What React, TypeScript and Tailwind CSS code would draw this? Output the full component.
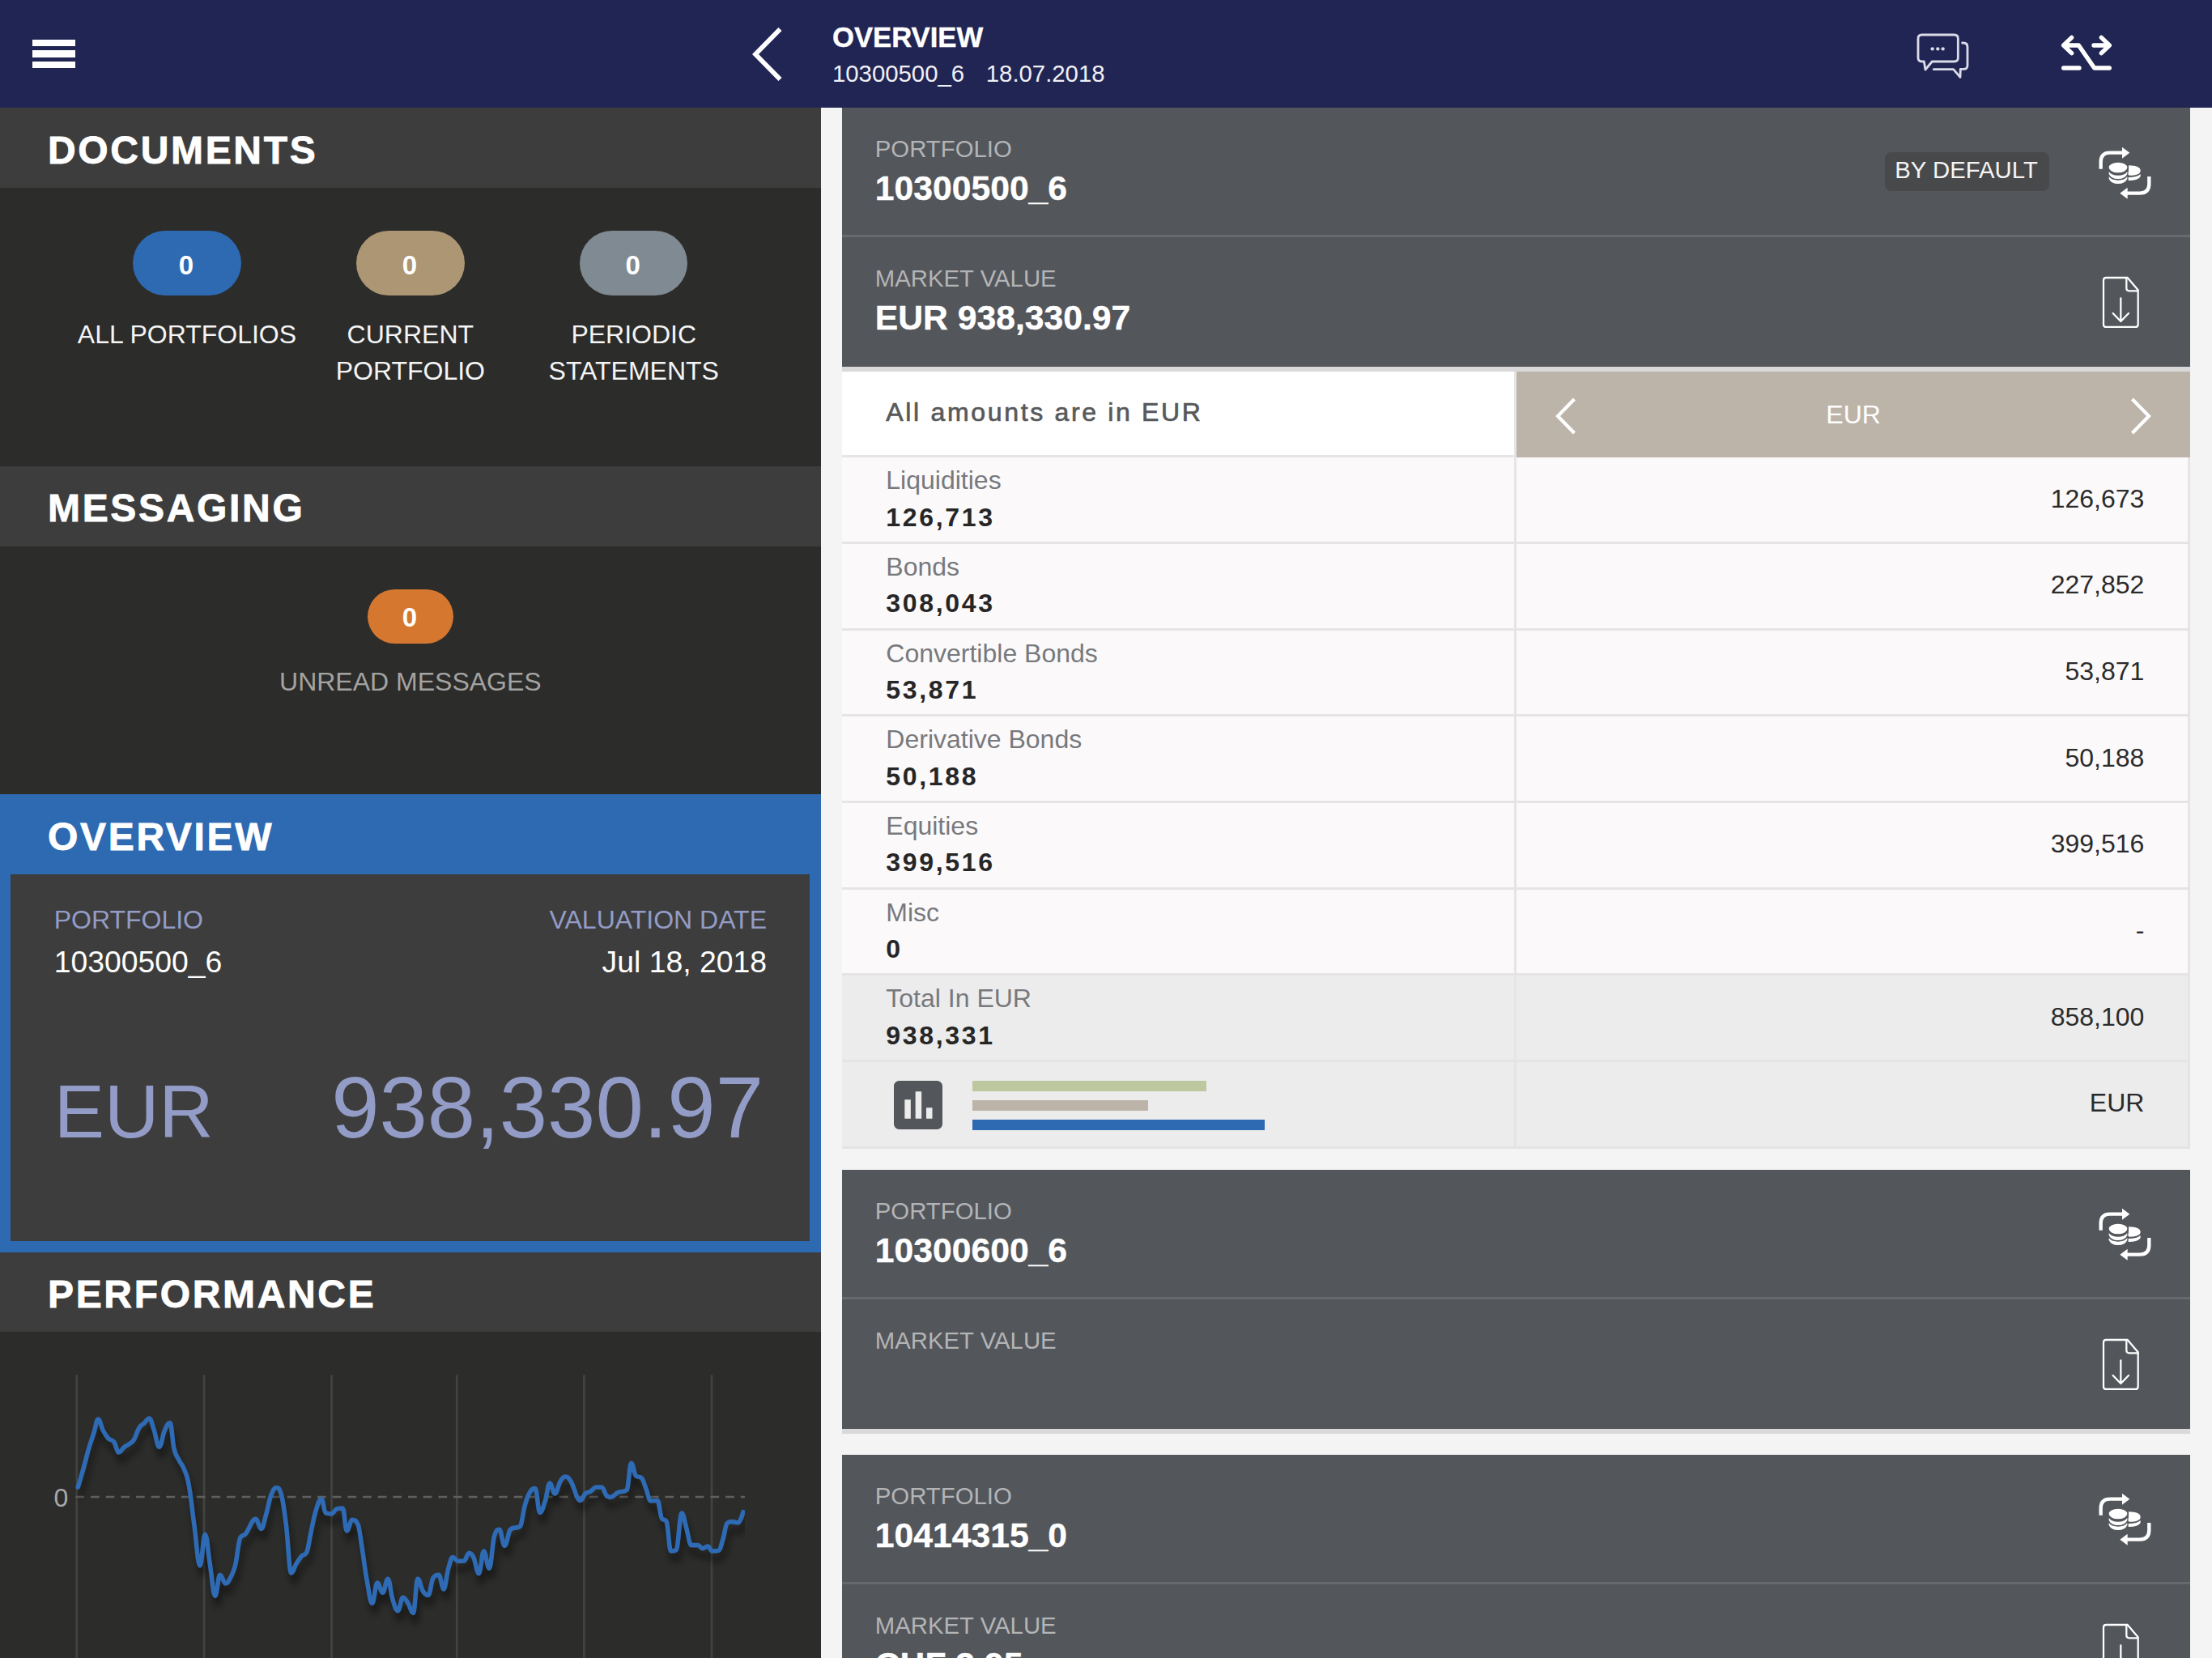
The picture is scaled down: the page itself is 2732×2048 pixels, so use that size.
import React from "react";

type Point = [number, number];

const performance: Point[] = [
  [96.3, 1837.3], [103.3, 1813.3], [109.5, 1790], [116, 1770], [121.3, 1753.3], [127.3, 1767.3], [134, 1777.3], [140.7, 1781.3],
  [146.7, 1794.3], [153.3, 1788], [165, 1779.3], [171.7, 1764.3], [178.3, 1758], [184.3, 1752.3], [190, 1766],
  [196.7, 1787.7], [203.3, 1767.3], [210, 1758], [215, 1790], [221.7, 1805], [227.3, 1815], [233.3, 1835],
  [240, 1885], [247, 1934.3], [253.3, 1895.7], [259.3, 1932.3], [265.7, 1971.7], [271.7, 1945.7], [278.7, 1956.3],
  [285, 1948.3], [290.7, 1933.3], [296.7, 1900], [303.3, 1895], [315.7, 1876.7], [322.7, 1888.7], [328.3, 1872.3],
  [335, 1846.7], [341.3, 1838], [347.3, 1846], [353.3, 1883.3], [359.7, 1943.3], [366, 1931.7], [372.7, 1922.3],
  [379, 1917.3], [384, 1893.3], [390, 1866.7], [397, 1852], [402.3, 1869.3], [409.3, 1870.3], [415.7, 1864.3],
  [423.3, 1863.3], [428.3, 1891.3], [435, 1877.7], [442.7, 1885], [447.3, 1913.3], [453.3, 1953.3], [459.7, 1980.7],
  [466, 1955.3], [472.7, 1967.7], [479, 1950.7], [485, 1976], [491.3, 1990], [497.7, 1973.7], [504, 1980.7],
  [510.3, 1992.7], [516, 1950.7], [522.3, 1965.7], [529, 1970.7], [535, 1949.3], [542, 1945.7], [548, 1963.3],
  [553.6, 1938.3], [559.3, 1924], [566, 1928.7], [573.2, 1928.3], [579.3, 1918.7], [585, 1924.3], [591.4, 1944],
  [597.5, 1916.3], [604.3, 1937.7], [610.4, 1898.3], [616.8, 1889.7], [623.2, 1909.7], [630, 1890], [642.9, 1885],
  [648.2, 1860], [654.6, 1843.3], [661, 1839], [666.8, 1868.7], [673.2, 1855], [679, 1832.3], [685.4, 1845.3],
  [692.1, 1830], [698.6, 1824.3], [705, 1830], [716.8, 1853.7], [723.2, 1845], [729.3, 1842.7], [736.4, 1837.3],
  [743.2, 1837.3], [748.9, 1847.3], [753.9, 1849.7], [763.2, 1844], [774.3, 1840.7], [779.6, 1807.7], [785.4, 1823.3],
  [792.5, 1826], [798.2, 1840], [803.6, 1854.3], [812.1, 1854], [817.1, 1875.3], [823.2, 1880], [828.6, 1916.3],
  [835, 1915.3], [842.1, 1869.3], [847.5, 1886.7], [853.9, 1909], [861.8, 1909], [867.9, 1913], [874.3, 1910.3],
  [879.6, 1916.3], [887.5, 1915.7], [892.9, 1901.7], [898.2, 1881.7], [903.6, 1880], [911.8, 1881.3], [917.9, 1868],
];

const gridLines = [94.7, 252, 409.5, 564.3, 721.4, 879];

/** Spline whose control points never leave the range of neighbouring values. */
function smoothPath(points: Point[]): string {
  const controls = points.map(([x, y], i) => {
    const prev = points[i - 1];
    const next = points[i + 1];
    if (!prev || !next) return { left: [x, y], right: [x, y] };
    const lx = (1.5 * x + prev[0]) / 2.5;
    let ly = (1.5 * y + prev[1]) / 2.5;
    const rx = (1.5 * x + next[0]) / 2.5;
    let ry = (1.5 * y + next[1]) / 2.5;
    const shift = ((ry - ly) * (rx - x)) / (rx - lx) + y - ry;
    ly += shift;
    ry += shift;
    const clamp = (v: number, other: number) =>
      Math.min(Math.max(v, Math.min(other, y)), Math.max(other, y));
    const cl = clamp(ly, prev[1]);
    if (cl !== ly) {
      ly = cl;
      ry = 2 * y - ly;
    }
    const cr = clamp(ry, next[1]);
    if (cr !== ry) {
      ry = cr;
      ly = 2 * y - ry;
    }
    return { left: [lx, ly], right: [rx, ry] };
  });
  let d = `M${points[0][0]} ${points[0][1]}`;
  for (let i = 1; i < points.length; i++) {
    const a = controls[i - 1].right;
    const b = controls[i].left;
    d += `C${a[0].toFixed(2)} ${a[1].toFixed(2)} ${b[0].toFixed(2)} ${b[1].toFixed(2)} ${points[i][0]} ${points[i][1]}`;
  }
  return d;
}

const linePath = smoothPath(performance);

function ChatIcon() {
  return (
    <svg viewBox="196 120 200 180" className="h-[60px] w-[66.67px]" fill="none" stroke="#dadbe8" strokeWidth="8.5" strokeLinejoin="round" strokeLinecap="round">
      <path d="M227 231H219Q205 231 205 217V146Q205 132 219 132H339Q353 132 353 146V217Q353 231 339 231H257L232 261Z" />
      <path d="M369 162H373Q388 162 388 177V245Q388 259 374 259H362L361 289L336 260H263" />
      <g fill="#dadbe8" stroke="none">
        <circle cx="258" cy="184" r="6.5" />
        <circle cx="278" cy="184" r="6.5" />
        <circle cx="297" cy="184" r="6.5" />
      </g>
    </svg>
  );
}

function RouteIcon() {
  return (
    <svg viewBox="736 130 192 140" className="h-[46.67px] w-[64px]" fill="none" stroke="#fff" strokeWidth="16" strokeLinejoin="round" strokeLinecap="round">
      <path d="M777 143L747 172L777 201M747 172H803L861 256H917M747 256H805M859 172H917M887 143L917 172L887 201" />
    </svg>
  );
}

function ExchangeIcon() {
  return (
    <svg viewBox="876 540 200 200" className="size-[66.67px] shrink-0" fill="#fff">
      <path d="M887 626V600Q887 566 921 566H970M1066 654V682Q1066 716 1032 716H982" fill="none" stroke="#fff" strokeWidth="13" />
      <path d="M966 545L994 566L966 587ZM986 695L958 716L986 737Z" />
      <ellipse cx="951" cy="621" rx="34" ry="19" />
      <path d="M917 636Q926 650 951 650Q976 650 985 636V645Q976 663 951 663Q926 663 917 645Z" />
      <path d="M917 654Q926 668 951 668Q976 668 985 654V663Q976 681 951 681Q926 681 917 663Z" />
      <path d="M990 613Q1034 614 1034 632Q1034 650 992 650Q988 648 988 642Q991 636 990 613Z" />
      <path d="M989 657Q1022 657 1034 645V654Q1027 669 989 669Z" />
    </svg>
  );
}

function DownloadIcon() {
  return (
    <svg viewBox="890 1019 140 200" className="h-[66.67px] w-[46.67px] shrink-0" fill="none" stroke="#fff" strokeWidth="6.8" strokeLinejoin="round" strokeLinecap="round">
      <path d="M985 1028H906Q896 1028 896 1038V1201Q896 1211 906 1211H1014Q1024 1211 1024 1201V1074Z" />
      <path d="M981 1029V1068Q981 1077 991 1077H1023" />
      <path d="M960 1104V1189M931 1160L960 1190L989 1160" />
    </svg>
  );
}

function ReportIcon() {
  return (
    <svg viewBox="0 0 24 24" className="size-[80px] shrink-0" fill="#53565b">
      <path d="M19 3H5c-1.100 0-2 .9-2 2v14c0 1.100.9 2 2 2h14c1.100 0 2-.9 2-2V5c0-1.100-.9-2-2-2zM9.250 17H7v-7h2.250v7zm4 0H11V7h2.250v10zm4 0H15v-4h2.250v4z" />
    </svg>
  );
}

function Chevron({ flip = false }: { flip?: boolean }) {
  return (
    <svg viewBox="0 0 26 46" className={flip ? "h-[46px] w-[26px] -scale-x-100" : "h-[46px] w-[26px]"} fill="none" stroke="#fff" strokeWidth="4.2">
      <path d="M23.500 2L3 23L23.500 44" />
    </svg>
  );
}

function TopBar() {
  return (
    <header className="flex h-[133.33px] shrink-0 items-center bg-[#212553] text-white">
      <div className="flex w-[929px] shrink-0 pl-[40px]">
        <button aria-label="Menu" className="flex w-[53.33px] flex-col gap-[5px]">
          <span className="h-[8.500px] bg-white" />
          <span className="h-[8.500px] bg-white" />
          <span className="h-[8.500px] bg-white" />
        </button>
      </div>
      <button aria-label="Back" className="w-[99px]">
        <svg viewBox="0 0 38 66" className="h-[66px] w-[38px]" fill="none" stroke="#fff" strokeWidth="5.800">
          <path d="M34.500 2L4 33L34.500 64" />
        </svg>
      </button>
      <div className="flex-1 pt-[4px]">
        <h1 className="text-[34.67px] leading-[44.600px] font-bold [-webkit-text-stroke:0.4px_#fff]">OVERVIEW</h1>
        <p className="flex gap-[26.67px] text-[29.33px] leading-[44.600px] text-[#f0f0f5]">
          <span>10300500_6</span>
          <span>18.07.2018</span>
        </p>
      </div>
      <div className="flex items-center gap-[113px] pt-[4px] pr-[122.67px]">
        <ChatIcon />
        <span className="-mt-[6px]">
          <RouteIcon />
        </span>
      </div>
    </header>
  );
}

function SectionTitle({ title, active = false }: { title: string; active?: boolean }) {
  return (
    <div className={`flex h-[98.67px] items-center pt-[6px] pl-[59px] ${active ? "bg-[#2e6ab2]" : "bg-[#3d3d3d]"}`}>
      <h2 className="text-[48px] leading-none font-bold tracking-[2.67px] text-white [-webkit-text-stroke:0.8px_#fff]">{title}</h2>
    </div>
  );
}

function DocumentCounter({ tone, label }: { tone: string; label: string }) {
  return (
    <div className="flex flex-1 flex-col items-center">
      <span className={`flex h-[80px] w-[133.33px] items-center justify-center rounded-full pt-[4px] pr-[2px] text-[33px] font-bold text-white ${tone}`}>0</span>
      <span className="mt-[25.500px] text-center text-[32px] leading-[45.33px] whitespace-pre-line text-[#f4f4f4]">{label}</span>
    </div>
  );
}

function PerformanceChart() {
  return (
    <svg viewBox="0 1645.33 1013.33 402.67" className="block h-[402.67px] w-[1013.33px]">
      <defs>
        <filter id="soft" x="-5%" y="-10%" width="110%" height="125%">
          <feGaussianBlur stdDeviation="4" />
        </filter>
        <clipPath id="plot">
          <rect x="60" y="1698" width="860" height="350" />
        </clipPath>
      </defs>
      {gridLines.map((x) => (
        <line key={x} x1={x} x2={x} y1="1698.67" y2="2048" stroke="#434342" strokeWidth="2.67" />
      ))}
      <line x1="93.33" x2="920" y1="1849.33" y2="1849.33" stroke="#60605f" strokeWidth="2.67" strokeDasharray="10.67 8" />
      <text x="66.5" y="1861" fontSize="32" fill="#a9a9a9" fontFamily="Liberation Sans, sans-serif">0</text>
      <g clipPath="url(#plot)" fill="none" strokeLinejoin="round" strokeLinecap="round">
        <path d={linePath} transform="translate(3 11)" stroke="#000" strokeOpacity="0.45" strokeWidth="6" filter="url(#soft)" />
        <path d={linePath} stroke="#2e6bb4" strokeWidth="5.6" />
      </g>
    </svg>
  );
}

function Sidebar() {
  return (
    <aside className="w-[1013.67px] shrink-0 overflow-hidden bg-[#2c2c2b]">
      <SectionTitle title="DOCUMENTS" />
      <div className="flex h-[344px] px-[93px] pt-[53.33px]">
        <DocumentCounter tone="bg-[#2e6ab2]" label="ALL PORTFOLIOS" />
        <DocumentCounter tone="bg-[#ac9673]" label={"CURRENT\nPORTFOLIO"} />
        <DocumentCounter tone="bg-[#808a92]" label={"PERIODIC\nSTATEMENTS"} />
      </div>
      <SectionTitle title="MESSAGING" />
      <div className="flex h-[306.67px] flex-col items-center pt-[53.33px]">
        <span className="flex h-[66.67px] w-[106.67px] items-center justify-center rounded-full bg-[#d67730] pt-[3px] pr-[2px] text-[33px] font-bold text-white">0</span>
        <span className="mt-[25px] text-[32px] leading-[45.33px] text-[#a3a3a2]">UNREAD MESSAGES</span>
      </div>
      <SectionTitle title="OVERVIEW" active />
      <div className="h-[466.67px] bg-[#2e6ab2] px-[13.33px]">
        <div className="h-[453.33px] bg-[#3d3d3d] px-[53.33px] pt-[30px]">
          <div className="flex justify-between">
            <div>
              <p className="text-[32px] leading-[52px] text-[#939cc6]">PORTFOLIO</p>
              <p className="text-[37.33px] leading-[52px] text-white">10300500_6</p>
            </div>
            <div className="text-right">
              <p className="text-[32px] leading-[52px] text-[#939cc6]">VALUATION DATE</p>
              <p className="text-[37.33px] leading-[52px] text-white">Jul 18, 2018</p>
            </div>
          </div>
          <div className="mt-[90px] flex items-baseline justify-between pr-[4px] text-[#939cc6]">
            <span className="text-[93.33px] leading-[128px]">EUR</span>
            <span className="text-[106.67px] leading-[128px]">938,330.97</span>
          </div>
        </div>
      </div>
      <SectionTitle title="PERFORMANCE" />
      <PerformanceChart />
    </aside>
  );
}

function Field({ label, value, children, divider = false }: { label: string; value?: string; children: React.ReactNode; divider?: boolean }) {
  return (
    <div className={`flex h-[160px] justify-between pl-[40.500px] ${divider ? "border-b-[3px] border-[#66696d]" : ""}`}>
      <div className="pt-[27.800px]">
        <p className="text-[29.33px] leading-[45.33px] text-[#b3b4b6]">{label}</p>
        <p className="text-[42.67px] leading-[53.33px] font-bold text-white [-webkit-text-stroke:0.4px_#fff]">{value}</p>
      </div>
      {children}
    </div>
  );
}

function PortfolioCard({ id, value, isDefault = false }: { id: string; value?: string; isDefault?: boolean }) {
  return (
    <div className="bg-[#dad9da] pb-[5.33px]">
      <div className="bg-[#53565b]">
        <Field label="PORTFOLIO" value={id} divider>
          <div className="flex items-center gap-[60.500px] pt-[2px] pr-[47.33px]">
            {isDefault && (
              <span className="flex h-[48px] w-[202.67px] -translate-y-[1px] items-center justify-center rounded-[8px] bg-[#48494b] pr-[2px] pb-[4px] text-[29.33px] whitespace-nowrap text-[#f4f4f4]">BY DEFAULT</span>
            )}
            <ExchangeIcon />
          </div>
        </Field>
        <Field label="MARKET VALUE" value={value}>
          <div className="flex items-center pr-[62.500px]">
            <DownloadIcon />
          </div>
        </Field>
      </div>
    </div>
  );
}

const holdings = [
  { name: "Liquidities", total: "126,713", eur: "126,673" },
  { name: "Bonds", total: "308,043", eur: "227,852" },
  { name: "Convertible Bonds", total: "53,871", eur: "53,871" },
  { name: "Derivative Bonds", total: "50,188", eur: "50,188" },
  { name: "Equities", total: "399,516", eur: "399,516" },
  { name: "Misc", total: "0", eur: "-" },
  { name: "Total In EUR", total: "938,331", eur: "858,100" },
];

function HoldingsTable() {
  return (
    <div className="text-[32px]">
      <div className="grid h-[106.67px] grid-cols-2">
        <div className="flex items-center border-r-[3px] border-b-[3px] border-[#e6e5e6] bg-white pb-[2px] pl-[54px] tracking-[2.67px] text-[#58595b] [-webkit-text-stroke:0.7px_#58595b]">
          All amounts are in EUR
        </div>
        <div className="flex items-center justify-between bg-[#bdb4a9] px-[48.500px] text-white">
          <span className="pt-[4px]">
            <Chevron />
          </span>
          <span>EUR</span>
          <span className="pt-[4px]">
            <Chevron flip />
          </span>
        </div>
      </div>
      {holdings.map((row, i) => (
        <div key={row.name} className={`grid h-[106.67px] grid-cols-2 ${i === 6 ? "bg-[#ececec]" : "bg-[#fbf9fa]"}`}>
          <div className="border-r-[3px] border-b-[3px] border-[#e6e5e6] pt-[6px] pl-[54px] leading-[45.33px]">
            <p className="text-[#77797d]">{row.name}</p>
            <p className="font-bold tracking-[2.67px] text-[#262626]">{row.total}</p>
          </div>
          <div className="border-r-[3px] border-b-[3px] border-[#e6e5e6] pt-[28.500px] pr-[54px] text-right leading-[45.33px] text-[#2b2b2b]">{row.eur}</div>
        </div>
      ))}
      <div className="grid h-[106.67px] grid-cols-2 bg-[#ececec]">
        <div className="flex items-center border-r-[3px] border-b-[3px] border-[#e4e4e4] pt-[3px] pl-[54px]">
          <ReportIcon />
          <div className="ml-[26.67px] flex w-[361px] flex-col gap-[10.67px]">
            <span className="h-[13.33px] w-4/5 bg-[#bdc89f]" />
            <span className="h-[13.33px] w-3/5 bg-[#bdb4a9]" />
            <span className="h-[13.33px] w-full bg-[#2e6ab2]" />
          </div>
        </div>
        <div className="border-r-[3px] border-b-[3px] border-[#e4e4e4] pt-[28.500px] pr-[54px] text-right leading-[45.33px] text-[#2b2b2b]">EUR</div>
      </div>
    </div>
  );
}

export default function App() {
  return (
    <div className="flex h-[2048px] w-[2732px] flex-col overflow-hidden bg-[#f4f4f4] font-['Liberation_Sans',Arial,sans-serif]">
      <TopBar />
      <div className="flex min-h-0 flex-1">
        <Sidebar />
        <main className="flex min-w-0 flex-1 flex-col gap-[26.67px] overflow-hidden px-[26.67px]">
          <section className="shrink-0">
            <PortfolioCard id="10300500_6" value="EUR 938,330.97" isDefault />
            <HoldingsTable />
          </section>
          <section className="shrink-0">
            <PortfolioCard id="10300600_6" />
          </section>
          <section className="shrink-0">
            <PortfolioCard id="10414315_0" value="CHF 3.95" />
          </section>
        </main>
      </div>
    </div>
  );
}
